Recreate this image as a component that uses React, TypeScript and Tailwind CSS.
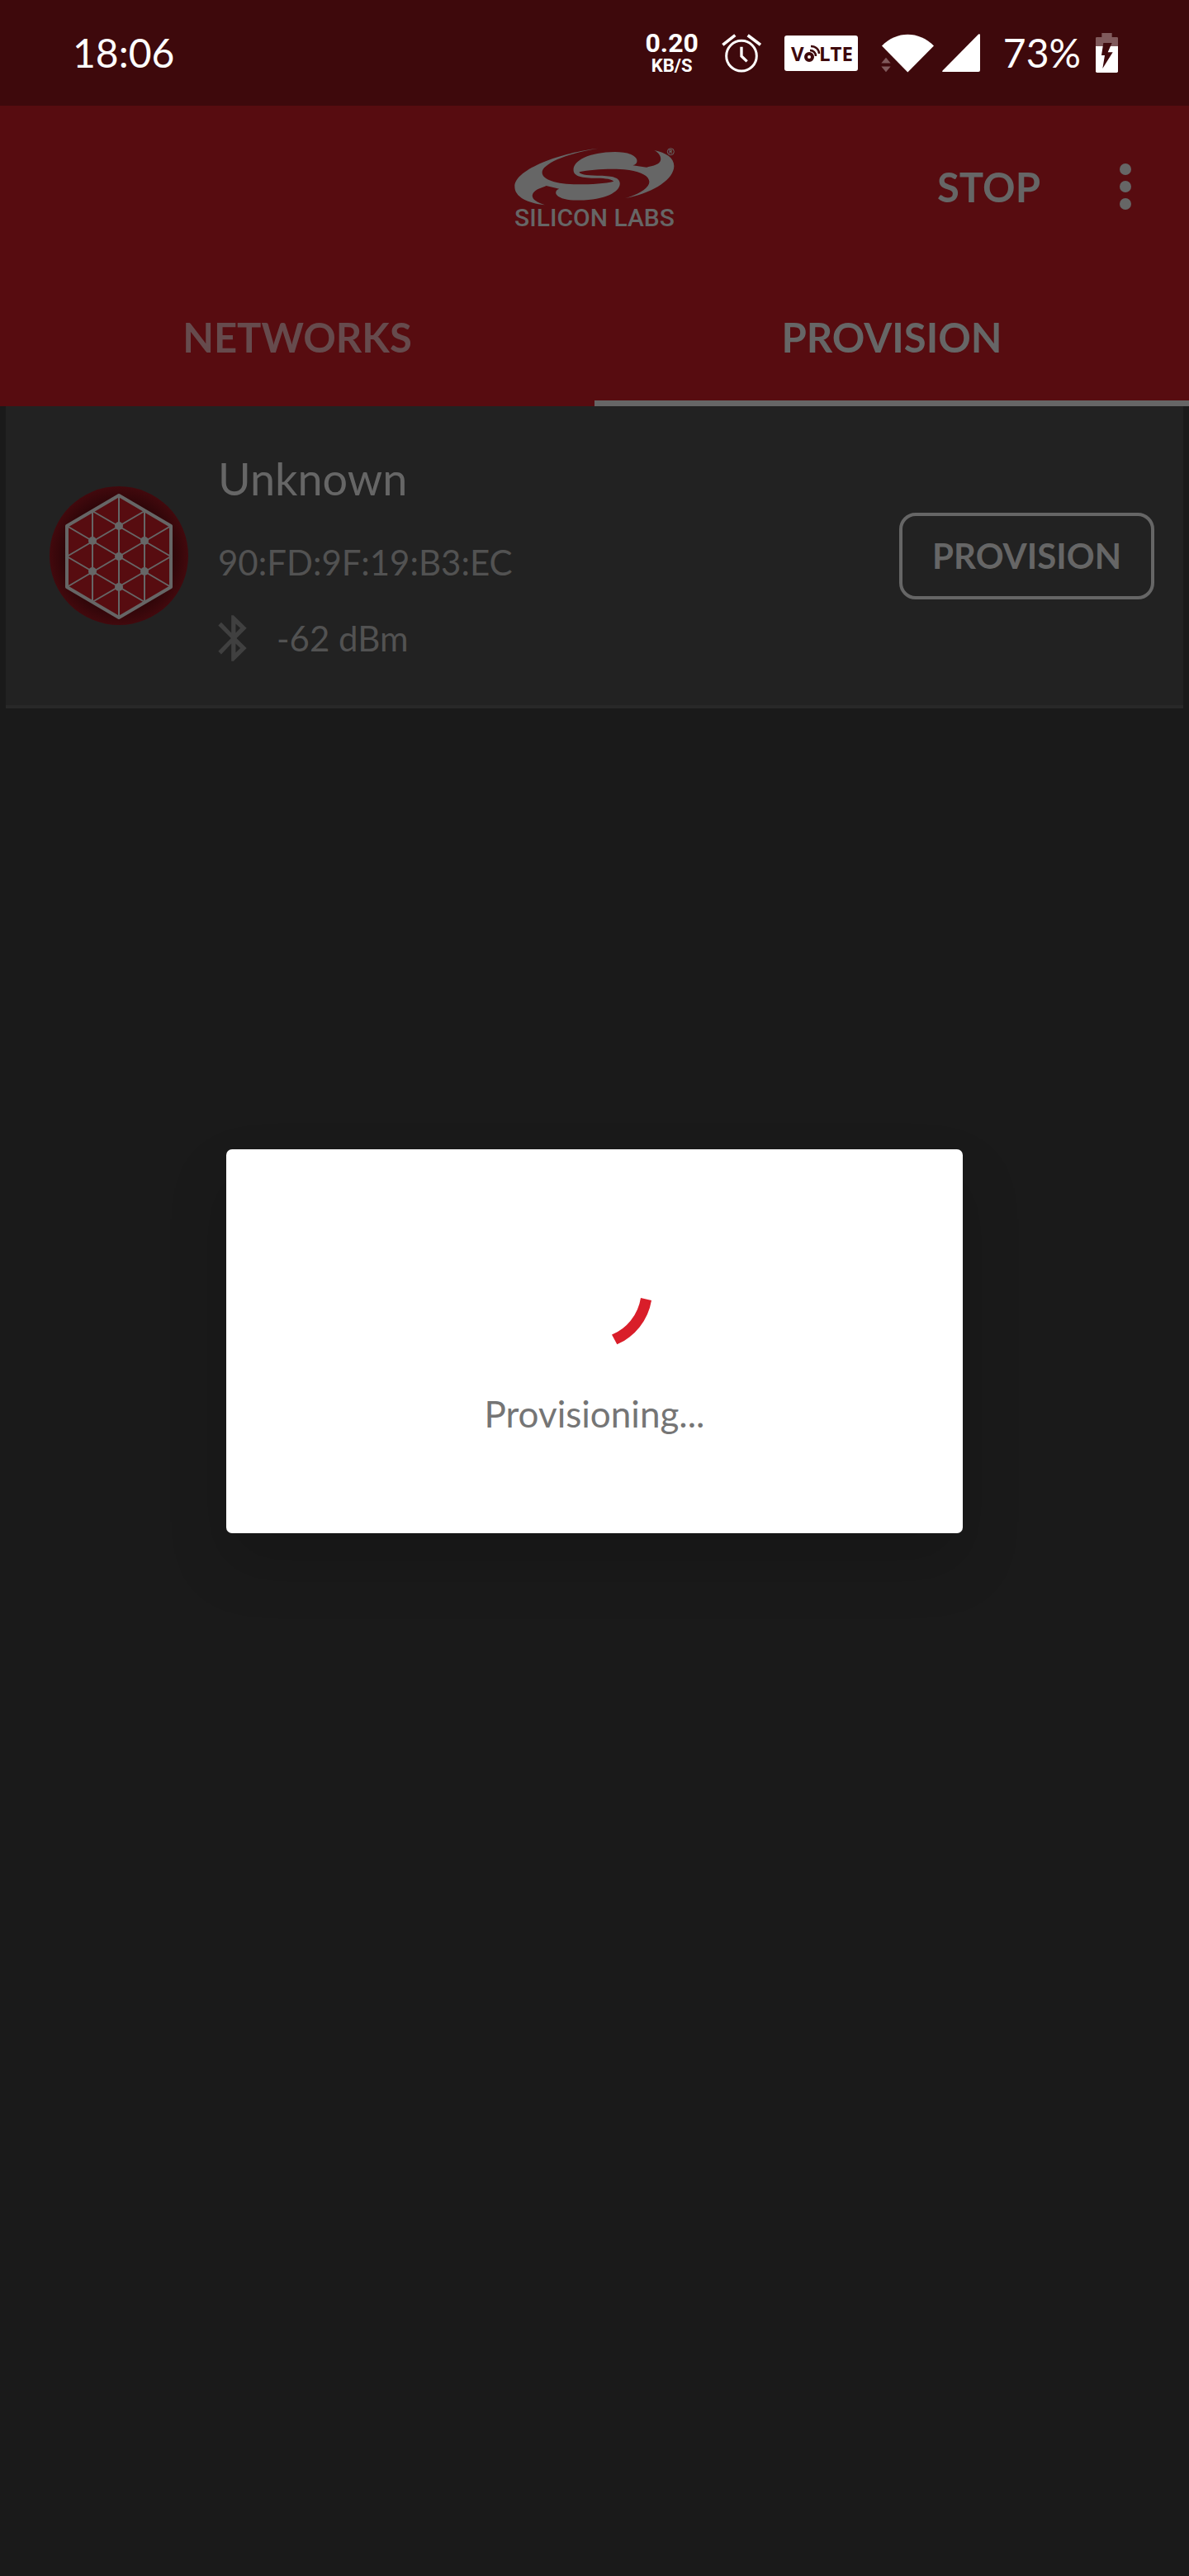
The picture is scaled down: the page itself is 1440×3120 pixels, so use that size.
function AlarmIcon() {
  return (
    <svg viewBox="342 66 144 141" className="h-[47px] w-12" fill="none" stroke="white" strokeWidth="9" aria-hidden="true">
      <circle cx="414" cy="146" r="55" />
      <path d="M414 113V147L434 166" strokeWidth="10" />
      <path d="M346 106L391 71M437 71L483 106" strokeWidth="11" />
    </svg>
  );
}

function VolteBadge() {
  return (
    <svg viewBox="0 0 89 43" className="h-[43px] w-[89px]" role="img" aria-label="VoLTE">
      <rect width="89" height="43" rx="3" fill="white" />
      <g fill="#3e090c" fontFamily="'Open Sans', sans-serif" fontWeight="700">
        <text x="8" y="31" fontSize="24">V</text>
        <text x="42" y="31" fontSize="24">LTE</text>
      </g>
      <g fill="none" stroke="#3e090c">
        <circle cx="30" cy="26" r="4" strokeWidth="4" />
        <path d="M31 18C35 18 38 21 38 25" strokeWidth="2.500" />
        <path d="M32 13C38 13 42 17 42 22" strokeWidth="2.500" />
      </g>
    </svg>
  );
}

function WifiIcon() {
  return (
    <svg viewBox="75 62 192 140" className="h-[47px] w-16" aria-hidden="true">
      <path d="M172 201L78 105C132 50 212 50 267 105Z" fill="white" />
      <path d="M93 148L110 168H76ZM93 200L110 180H76Z" fill="#805a5c" />
    </svg>
  );
}

function SignalIcon() {
  return (
    <svg viewBox="0 0 46 46" className="size-[46px]" aria-hidden="true">
      <path d="M44 .6C45 -.2 46 .4 46 1.500V44Q46 46 44 46H1Q-.6 46 .6 44.500Z" fill="white" />
    </svg>
  );
}

function BatteryIcon() {
  return (
    <svg viewBox="861 60 81 144" className="h-12 w-[27px]" aria-hidden="true">
      <path d="M861 108V79Q861 75 865 75H883V60H920V75H938Q942 75 942 79V108Z" fill="#805a5c" />
      <path d="M861 108H942V199Q942 204 937 204H866Q861 204 861 199Z" fill="white" />
      <path d="M889 96H920L905 130H923L886 189L894 141H882Z" fill="#3e090c" />
    </svg>
  );
}

function StatusBar() {
  return (
    <div className="flex h-32 items-center justify-between bg-[#3e090c] pr-[86px] pl-[88px] text-[48px] leading-none text-white">
      <time>18:06</time>
      <div className="flex items-center gap-7">
        <div className="flex flex-col items-center font-[Roboto,sans-serif] font-bold">
          <span className="text-[32px] leading-8">0.20</span>
          <span className="text-[22px] leading-6">KB/S</span>
        </div>
        <AlarmIcon />
        <VolteBadge />
        <div className="flex items-center gap-2.5">
          <WifiIcon />
          <SignalIcon />
        </div>
        <div className="flex items-center gap-[18px]">
          <span>73%</span>
          <BatteryIcon />
        </div>
      </div>
    </div>
  );
}

function Logo() {
  return (
    <div className="flex flex-col items-center pt-[5px] text-[#666666]">
      <svg viewBox="69 54 583 210" className="h-[70px] w-[194px]" aria-hidden="true">
        <path
          fill="currentColor"
          d="M375 56C245 70 70 130 70 195C70 232 115 255 180 262C140 250 125 232 140 215C152 202 168 200 185 192L232 203C218 207 215 222 228 230C245 242 275 245 305 245C400 244 453 215 453 184C453 160 420 155 370 155C330 155 305 150 305 142C340 134 390 130 440 131C510 132 560 150 560 178C560 200 520 225 470 238C570 220 650 170 650 120C650 90 620 72 578 63C600 75 608 95 596 108C585 118 570 120 550 125L500 118C517 113 520 98 508 88C495 74 465 69 435 69C340 70 284 100 284 134C284 158 315 164 370 164C400 164 428 169 430 176C400 184 350 187 300 187C220 186 170 170 170 143C170 115 250 75 375 56Z"
        />
        <circle cx="638" cy="68" r="12" fill="none" stroke="currentColor" strokeWidth="3" />
        <text x="638" y="75" textAnchor="middle" fontSize="19" fontWeight="700" fill="currentColor" fontFamily="Roboto, sans-serif">
          R
        </text>
      </svg>
      <span className="font-[Roboto,sans-serif] text-[30px] leading-[30px] font-medium">SILICON LABS</span>
    </div>
  );
}

function Header() {
  return (
    <header className="bg-[#570c10] font-bold text-[#666666]">
      <div className="grid h-[196px] grid-cols-[1fr_auto_1fr] items-center">
        <span />
        <Logo />
        <div className="flex items-center justify-end gap-[72px] pr-[46px]">
          <button className="text-[49px] leading-[60px]">STOP</button>
          <button aria-label="More options" className="flex w-[62px] justify-center">
            <svg viewBox="0 0 14 56" className="h-14 w-3.5" fill="currentColor" aria-hidden="true">
              <circle cx="7" cy="7" r="7" />
              <circle cx="7" cy="28" r="7" />
              <circle cx="7" cy="49" r="7" />
            </svg>
          </button>
        </div>
      </div>
      <div role="tablist" className="grid h-[168px] grid-cols-2 text-[49px] leading-[60px]">
        <button role="tab" aria-selected="false" className="border-b-[7px] border-transparent pt-[7px] text-[#664b4d]">
          NETWORKS
        </button>
        <button role="tab" aria-selected="true" className="border-b-[7px] border-[#666666] pt-[7px]">
          PROVISION
        </button>
      </div>
    </header>
  );
}

function MeshIcon() {
  const nodes = [[84, 48], [52, 66], [115, 66], [84, 85], [52, 103], [115, 103], [84, 122]];
  return (
    <svg viewBox="0 0 168 168" className="size-[168px] shrink-0" aria-hidden="true">
      <defs>
        <radialGradient id="disc">
          <stop offset="0.75" stopColor="#2c0508" />
          <stop offset="1" stopColor="#42090d" />
        </radialGradient>
      </defs>
      <circle cx="84" cy="84" r="84" fill="url(#disc)" />
      <path d="M84 11L147 48V122L84 159L21 122V48Z" fill="#570c10" stroke="#666666" strokeWidth="4" strokeLinejoin="round" />
      <path
        d="M84 11V159M52 30V140M115 30V140M52 30L147 85M21 48L147 122M21 85L115 140M115 30L21 85M147 48L21 122M147 85L52 140"
        stroke="#666666"
        strokeWidth="2"
      />
      {nodes.map(([x, y]) => (
        <circle key={`${x}-${y}`} cx={x} cy={y} r="5" fill="#666666" />
      ))}
    </svg>
  );
}

function BluetoothIcon() {
  return (
    <svg viewBox="72 675 106 168" className="h-14 w-[35px]" aria-hidden="true">
      <path
        fill="#404040"
        fillRule="evenodd"
        d="M121 675H129L177 722L140 759L177 795L129 843H121V779L84 818L73 807L120 759L73 712L84 701L121 739ZM137 706V739L154 722ZM137 779V812L154 795Z"
      />
    </svg>
  );
}

function DeviceCard() {
  return (
    <article className="mx-[7px] flex items-center border-b-4 border-[#282828] bg-[#222222] py-[53px] pr-[35px] pl-[53px]">
      <MeshIcon />
      <div className="ml-9 flex-1 text-[42px] leading-[56px] text-[#525252]">
        <h2 className="text-[54px] leading-[70px] text-[#666666]">Unknown</h2>
        <p className="mt-[38px]">90:FD:9F:19:B3:EC</p>
        <p className="mt-9 flex items-center gap-9">
          <BluetoothIcon />
          <span>-62 dBm</span>
        </p>
      </div>
      <button className="rounded-[20px] border-4 border-[#666666] px-9 py-5 text-[42px] leading-[57px] font-bold text-[#666666]">
        PROVISION
      </button>
    </article>
  );
}

function ProgressDialog() {
  return (
    <div className="absolute inset-x-0 top-32 bottom-0 flex items-center justify-center">
      <div
        role="dialog"
        aria-label="Provisioning"
        className="flex w-[62%] flex-col items-center rounded-[7px] bg-white pt-22 pb-[117px] shadow-[0_36px_72px_0_rgba(0,0,0,0.15)]"
      >
        <svg viewBox="636 1479 168 168" className="size-[168px]" aria-hidden="true">
          <path d="M776 1571L789 1574A71 71 0 0 1 747.300 1627.300L741 1615.500A58 58 0 0 0 776 1571Z" fill="#d91e2a" />
        </svg>
        <p role="status" className="mt-9 text-[44px] leading-[56px] text-[#757575]">
          Provisioning...
        </p>
      </div>
    </div>
  );
}

export default function App() {
  return (
    <div className="relative min-h-screen bg-[#1a1a1a] font-[Lato,sans-serif]">
      <StatusBar />
      <Header />
      <main>
        <DeviceCard />
      </main>
      <ProgressDialog />
    </div>
  );
}
